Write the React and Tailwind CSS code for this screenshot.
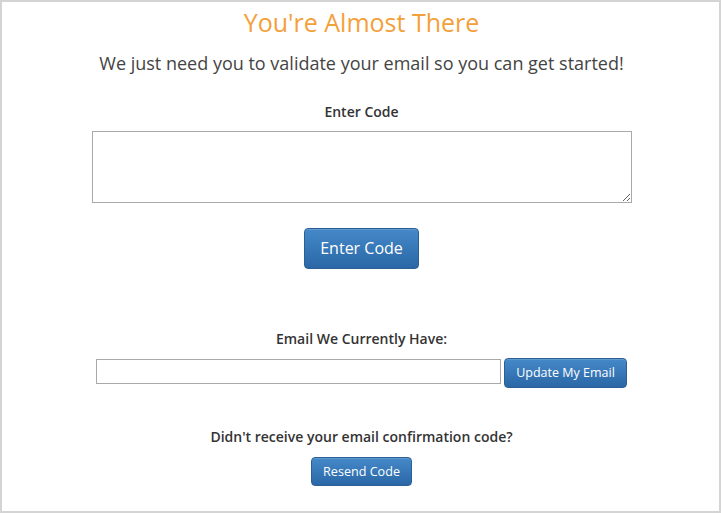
const btn =
  'rounded-[4px] border border-[#2c5f93] bg-gradient-to-b from-[#4589c9] to-[#2a67a6] text-white shadow-[inset_0_1px_0_rgba(255,255,255,0.15)]'

export default function App() {
  return (
    <div
      className="h-[513px] w-[721px] border-2 border-[#d4d4d4] bg-white pl-[2px] flex flex-col items-center text-[#333]"
      style={{ fontFamily: '"Open Sans", "Liberation Sans", sans-serif' }}
    >
      <h1 className="mt-[5px] text-[25px] leading-[30px] text-[#f4a03a]">You're Almost There</h1>
      <p className="mt-[14px] text-[18px] leading-[24px] text-[#444]">
        We just need you to validate your email so you can get started!
      </p>

      <label className="mt-[27px] text-[14px] leading-[20px] font-semibold text-[#333]">Enter Code</label>
      <textarea className="mt-[9px] h-[72px] w-[540px] border border-[#a9a9a9] outline-none" />
      <button className={`${btn} mt-[25px] h-[41px] w-[115px] pb-[1px] text-[16px]`}>Enter Code</button>

      <label className="mt-[60px] text-[14px] leading-[20px] font-semibold text-[#333]">
        Email We Currently Have:
      </label>
      <div className="mt-[9px] flex items-start gap-[3px]">
        <input className="mt-[1px] h-[25px] w-[405px] border border-[#a9a9a9] outline-none" />
        <button className={`${btn} h-[30px] w-[123px] text-[12.5px]`}>Update My Email</button>
      </div>

      <label className="mt-[39px] text-[14px] leading-[20px] font-semibold text-[#333]">
        Didn't receive your email confirmation code?
      </label>
      <button className={`${btn} mt-[10px] h-[29px] w-[101px] pt-[1px] text-[12.6px]`}>Resend Code</button>
    </div>
  )
}
